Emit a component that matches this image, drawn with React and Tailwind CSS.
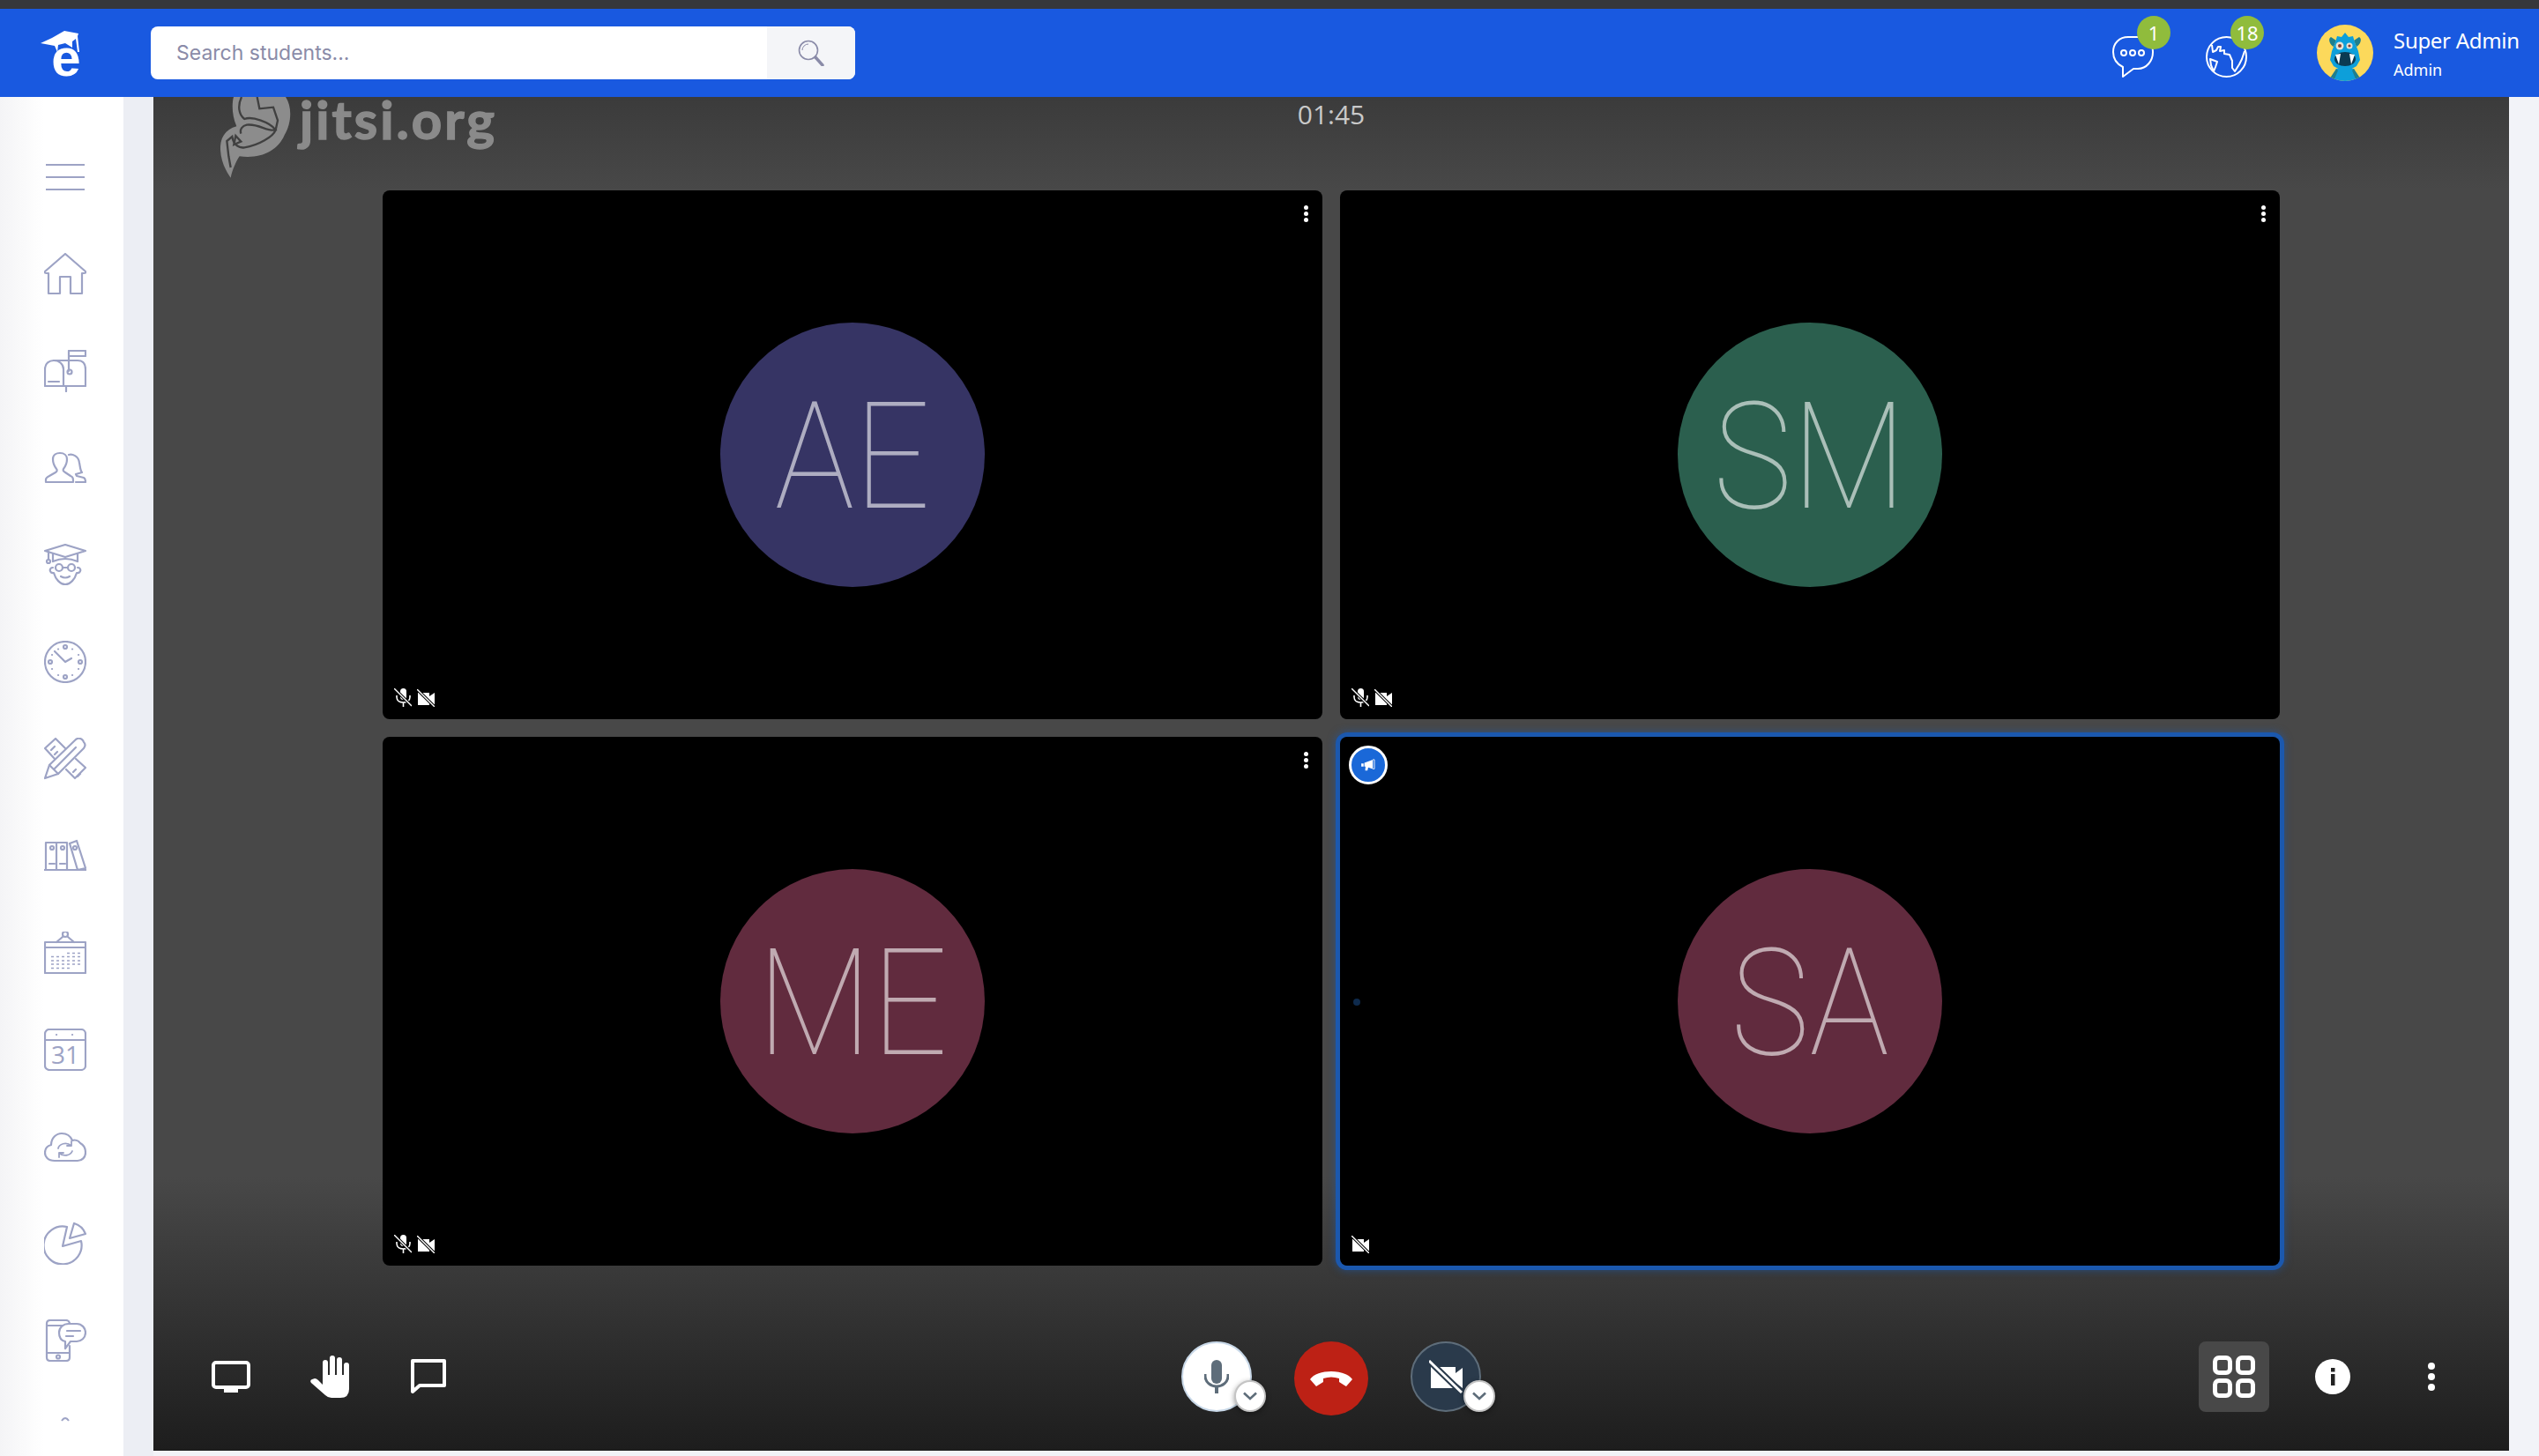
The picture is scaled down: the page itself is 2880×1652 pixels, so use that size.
const SIDE = '#9da3c5';

function SideIcon({ children }) {
  return (
    <svg viewBox="0 0 48 48" className="w-12 h-12" fill="none" stroke={SIDE} strokeWidth="2.2" strokeLinejoin="round" strokeLinecap="round">
      {children}
    </svg>
  );
}

const sideIcons = [
  // hamburger
  <>
    <path d="M2 10 H46 M2 24 H46 M2 38 H46" strokeLinecap="butt" />
  </>,
  // home
  <path d="M24 1 L47 21 Q48 23 45 23 H43 V46 H30 V27 H18 V46 H5 V23 H3 Q0 23 1 21 Z" />,
  // mailbox
  <>
    <path d="M28 24 V1 H47 V7 H28" />
    <circle cx="29" cy="25" r="2.5" />
    <path d="M1 41 V22 C1 15 6 12 11 12 H38 C44 12 47 16 47 22 V41 Z" />
    <path d="M22 41 V22 C22 16 17 12 11 12" />
    <path d="M5 36 H17 M25 41 V47" />
  </>,
  // users
  <>
    <path d="M2 40 V37 C2 35 4 34 6 33 L13 29 C15 28 15 26 14 25 C11 21 10 18 10 14 C10 9 14 7 18 7 C23 7 26 10 26 14 C26 18 25 21 22 25 C21 27 22 28 24 29 L30 33 C33 34 33 36 33 40 Z" />
    <path d="M28 9 C32 8 39 10 40 18 C41 23 41 27 43 29 L36 31 L37 33 L45 35 C47 36 47 38 47 40 H36" />
  </>,
  // student
  <>
    <path d="M24 1 L47 8 L24 15 L1 8 Z" />
    <path d="M10 11 V20 M38 11 V20 M5 9 V18" />
    <circle cx="5" cy="20" r="2" />
    <path d="M10 20 Q24 14 38 20" />
    <circle cx="17" cy="27" r="4" />
    <circle cx="31" cy="27" r="4" />
    <path d="M21 27 H27 M19 37 Q24 40 29 37" />
    <path d="M10 27 C5 27 6 34 11 33 C13 40 18 46 24 46 C30 46 35 40 37 33 C42 34 43 27 38 27" />
  </>,
  // clock
  <>
    <circle cx="24" cy="24" r="23" />
    <circle cx="24" cy="7" r="2" />
    <circle cx="24" cy="41" r="2" />
    <circle cx="7" cy="24" r="2" />
    <circle cx="41" cy="24" r="2" />
    <path d="M12 12 L24 24 L31 20" />
    <path d="M32 9.5 h.1 M39 16 h.1 M39 32 h.1 M32 39 h.1 M16 39 h.1 M9 32 h.1 M9 16 h.1 M16 9.5 h.1" />
  </>,
  // ruler and pencil
  <>
    <path d="M12 24 L1 12 L13 1 L24 12 M8 14 L12 10 M12 19 L15 16" />
    <path d="M36 24 L47 34 L35 46 L25 36 M33 39 L36 36 M38 44 L41 41" />
    <path d="M1 46 L6 31 L36 2 Q40 -1 44 3 L45 5 Q48 8 45 12 L16 41 Z" />
    <path d="M6 31 L16 41 M12 35 L36 11" />
  </>,
  // binders
  <>
    <path d="M0 40 H48 M2 40 V9 H26 V40 M14 9 V40" />
    <path d="M29 10 L37 7 L47 38 L38 40 Z" />
    <circle cx="9" cy="15" r="2" />
    <circle cx="21" cy="15" r="2" />
    <circle cx="35" cy="15" r="2" />
    <path d="M6 33 H12 M18 33 H24" />
  </>,
  // wall calendar
  <>
    <circle cx="24" cy="3" r="3" />
    <path d="M21 6 L14 12 M27 6 L34 12" />
    <path d="M1 12 H47 V47 H1 Z M1 18 H47" />
    <g strokeWidth="1.6" strokeDasharray="3 3" strokeLinecap="butt">
      <path d="M26 24.5 H42 M26 28.5 H42" />
      <path d="M8 33 H42 M8 37 H42" />
      <path d="M8 41.5 H30" />
      <path d="M8 28.5 H24" />
    </g>
  </>,
  // date 31
  <>
    <rect x="1" y="1" width="46" height="46" rx="5" />
    <path d="M1 13 H47 M14 7 h.1 M32 7 h.1" />
    <text x="24" y="40" textAnchor="middle" fontSize="28" fontWeight="400" fill={SIDE} stroke="none" fontFamily="'Open Sans', sans-serif">31</text>
  </>,
  // cloud sync
  <>
    <path d="M12 40 C4 40 1 35 1 31 C1 26 4 23 8 22 C8 14 14 9 20 9 C26 9 30 12 32 17 C35 16 39 17 41 20 C45 22 47 26 47 31 C47 36 43 40 38 40 Z" />
    <path d="M16 26 C17 21 25 18 31 23 M31 18 V23 H26" strokeWidth="1.8" />
    <path d="M32 29 C30 34 22 36 17 31 M17 36 V31 H22" strokeWidth="1.8" />
  </>,
  // pie chart
  <>
    <path d="M26 5 A21.5 21.5 0 1 0 42 21 L21 27 Z" />
    <path d="M34 1 A20 20 0 0 1 47 13 L29 18 Z" />
  </>,
  // phone message
  <>
    <path d="M29 4 Q28 1 25 1 H7 Q3 1 3 5 V43 Q3 47 7 47 H25 Q29 47 29 43 V30" />
    <path d="M3 7 H21 M3 38 H29" />
    <circle cx="16" cy="42.5" r="2" />
    <path d="M28 5 H37 C43 5 47 10 47 15 C47 21 42 25 37 25 H30 L24 33 V25 C19 24 17 20 17 15 C17 9 22 5 28 5 Z" />
    <path d="M26 13 H41 M25 19 H33" />
  </>,
];

function Logo() {
  return (
    <svg viewBox="0 0 44 52" className="w-11 h-[52px] overflow-visible">
      <path d="M27 0 L43 3 L42 6 L44 24 L42 24 L40 9 L36 12 L36 19 L28 14 L20 16 L19 24 L16 17 L0 14 L13 8 Z" fill="#fff" />
      <text x="29" y="51" textAnchor="middle" fontSize="60" fontWeight="900" fill="#fff" fontFamily="'Liberation Sans', sans-serif">e</text>
    </svg>
  );
}

function Monster() {
  return (
    <svg viewBox="0 0 64 64" className="w-16 h-16 rounded-full">
      <rect width="64" height="64" fill="#fcd95b" />
      <path d="M18 64 L22 50 H42 L46 64 Z" fill="#0d9fda" />
      <path d="M14 62 L22 50 L24 52 L19 64 Z M50 62 L42 50 L40 52 L45 64 Z" fill="#1f7f8e" />
      <path d="M16 14 C12 16 15 23 19 25 L22 18 Z M48 14 C52 16 49 23 45 25 L42 18 Z" fill="#1f7f8e" />
      <path d="M32 9 L36 14 L41 13 L43 20 L47 30 L49 40 L45 47 L38 51 H26 L19 47 L15 40 L17 30 L21 20 L23 13 L28 14 Z" fill="#0d9fda" />
      <circle cx="26" cy="24" r="4.5" fill="#e9e2d4" />
      <circle cx="37" cy="24" r="3.5" fill="#e9e2d4" />
      <circle cx="26" cy="24" r="2" fill="#8a3f2e" />
      <circle cx="37" cy="24" r="1.6" fill="#8a3f2e" />
      <ellipse cx="32" cy="39" rx="12" ry="8" fill="#0b3a52" />
      <path d="M21 34 L27 33 L25 45 Z M43 34 L37 33 L39 45 Z" fill="#fff" />
    </svg>
  );
}

function Badge({ value, className }) {
  return (
    <span className={`absolute w-[38px] h-[38px] rounded-full bg-[#90bc3c] text-white text-[22px] flex items-center justify-center font-['Noto_Sans',sans-serif] ${className}`}>
      {value}
    </span>
  );
}

function Header() {
  return (
    <div className="h-[100px] bg-[#1959e0] flex items-center shrink-0">
      <div className="w-[171px] pl-[46px] pt-[1px] flex items-center">
        <Logo />
      </div>
      <div className="w-[799px] h-[60px] bg-white rounded-lg flex overflow-hidden">
        <input
          placeholder="Search students..."
          className="flex-1 min-w-0 pl-[29px] text-[23px] font-['Inter',sans-serif] text-[#8a8ba8] placeholder:text-[#8a8ba8] outline-none"
        />
        <button className="w-[100px] bg-[#f4f5f8] flex items-center justify-center">
          <svg viewBox="0 0 30 30" className="w-[30px] h-[30px]" fill="none" stroke="#8a8ba8" strokeWidth="1.6">
            <circle cx="12" cy="12" r="10.5" />
            <path d="M5 12 A7 7 0 0 1 12 5" strokeWidth="1" />
            <path d="M20 20 L28 29" strokeWidth="3.4" strokeLinecap="round" />
          </svg>
        </button>
      </div>
      <div className="ml-auto flex items-center pr-[21px]">
        <div className="relative w-[47px] h-[47px] mt-[9px] mr-[59px]">
          <svg viewBox="0 0 47 47" className="w-[47px] h-[47px]" fill="none" stroke="#fff" strokeWidth="2" strokeLinejoin="round">
            <path d="M18 1 H29 C39 1 46 8 46 18 C46 28 39 37 29 37 H24 L12 46 L12 35 C6 32 1 26 1 18 C1 8 8 1 18 1 Z" />
            <circle cx="13" cy="19" r="3" />
            <circle cx="23" cy="19" r="3" />
            <circle cx="33" cy="19" r="3" />
          </svg>
          <Badge value="1" className="-top-[23px] left-[28px]" />
        </div>
        <div className="relative w-[47px] h-[47px] mt-[9px] mr-[79px]">
          <svg viewBox="0 0 47 47" className="w-[47px] h-[47px]" fill="none" stroke="#fff" strokeWidth="2" strokeLinejoin="round">
            <circle cx="23.5" cy="23.5" r="22.5" />
            <path d="M7 10 L8 18 L12 16 L14 12 L17 12 L16 17 L21 16 L21 20 L27 21 L30 28 L30 36 L33 40 L38 32 L41 26 L44 17" />
            <path d="M5 26 L13 29 L11 35 L9 40 L6 33 Z" />
          </svg>
          <Badge value="18" className="-top-[23px] left-[28px]" />
        </div>
        <Monster />
        <div className="ml-[23px] w-[144px] flex flex-col text-white font-['Noto_Sans',sans-serif] whitespace-nowrap">
          <span className="text-[24px] tracking-[-0.3px] leading-[34px]">Super Admin</span>
          <span className="text-[18px] leading-[26px] mt-[3px]">Admin</span>
        </div>
      </div>
    </div>
  );
}

function Sidebar() {
  return (
    <div className="w-[140px] shrink-0 h-[1542px] overflow-hidden pt-[36px] pl-[7px] bg-[linear-gradient(to_right,#f4f4f6,#ffffff_50px)] flex flex-col items-center">
      {sideIcons.map((icon, i) => (
        <div key={i} className="h-[110px] w-full shrink-0 flex items-center justify-center">
          <SideIcon>{icon}</SideIcon>
        </div>
      ))}
      <svg viewBox="0 0 12 6" className="w-3 h-[6px] mt-[31px] shrink-0" fill="none" stroke={SIDE} strokeWidth="2">
        <path d="M2 5 Q6 -1 10 5" />
      </svg>
    </div>
  );
}

function VideoOffSmall({ className }) {
  return (
    <svg viewBox="0 0 20 20" className={className}>
      <path d="M1 4 H14 V8 L20 4 V18 L14 14 V18 H1 Z" fill="#fff" />
      <path d="M0 0 L20 20" stroke="#000" strokeWidth="3.4" />
      <path d="M0 0 L20 20" stroke="#fff" strokeWidth="1.4" />
    </svg>
  );
}

function MicOffSmall({ className }) {
  return (
    <svg viewBox="0 0 20 21" className={className}>
      <rect x="7" y="0" width="7" height="13" rx="3.5" fill="#fff" />
      <path d="M3 8 V10 C3 14 6.5 16 10.5 16 C14.5 16 18 14 18 10 V8 M10.5 16 V21" fill="none" stroke="#fff" strokeWidth="1.6" />
      <path d="M0 0 L20 20" stroke="#000" strokeWidth="3.4" />
      <path d="M0 0 L20 20" stroke="#fff" strokeWidth="1.4" />
    </svg>
  );
}

function Tile({ initials, color, muted, speaker }) {
  return (
    <div className={`relative bg-black rounded-lg flex items-center justify-center ${speaker ? 'shadow-[0_0_0_5px_#1b58ae,0_0_8px_6px_rgba(27,88,174,0.5)]' : ''}`}>
      <div className={`w-[300px] h-[300px] rounded-full flex items-center justify-center ${color}`}>
        <span className="inline-block scale-x-90 mt-[5px] text-[168px] leading-none font-thin text-white/60 font-['Roboto',sans-serif]">{initials}</span>
      </div>
      {speaker ? (
        <>
          <span className="absolute top-[10px] left-[10px] w-[44px] h-[44px] rounded-full bg-[#1a68d8] border-[3px] border-white flex items-center justify-center">
            <svg viewBox="0 0 18 16" className="w-4 h-[14px]">
              <path d="M0 6 H3 V10 H0 Z M4 5 L15 1 V13 L9 11 L8 15 H5 L5.5 10 L4 10 Z" fill="#fff" />
              <path d="M15 1 L17 1 V13 L15 13" fill="none" stroke="#fff" strokeWidth="1" />
            </svg>
          </span>
          <span className="absolute left-[15px] top-[297px] w-2 h-2 rounded-full bg-[#0e2a4c]" />
        </>
      ) : (
        <span className="absolute top-[17px] right-[16px] flex flex-col gap-[2px]">
          <i className="w-[5px] h-[5px] rounded-full bg-white" />
          <i className="w-[5px] h-[5px] rounded-full bg-white" />
          <i className="w-[5px] h-[5px] rounded-full bg-white" />
        </span>
      )}
      <div className="absolute left-[13px] bottom-[14px] flex gap-[6px] items-center">
        {muted && <MicOffSmall className="w-5 h-[21px]" />}
        <VideoOffSmall className="w-5 h-5" />
      </div>
    </div>
  );
}

function Chevron({ className }) {
  return (
    <span className={`absolute w-9 h-9 rounded-full bg-white border-2 border-[#c4c4c4] shadow-[0_2px_6px_rgba(0,0,0,0.4)] flex items-center justify-center ${className}`}>
      <svg viewBox="0 0 16 10" className="w-4 h-[10px]" fill="none" stroke="#5e6d7a" strokeWidth="2.6">
        <path d="M1 1.5 L8 8 L15 1.5" />
      </svg>
    </span>
  );
}

function Toolbar() {
  return (
    <div className="grid grid-cols-[1fr_auto_1fr] mt-[86px]">
      <div className="flex items-center h-20 pl-[66px]">
        <svg viewBox="0 0 44 36" className="w-11 h-9" fill="#fff">
          <rect x="2" y="2" width="40" height="28" rx="3" fill="none" stroke="#fff" strokeWidth="4" />
          <rect x="14" y="31" width="16" height="5" />
        </svg>
        <svg viewBox="0 0 44 48" className="w-11 h-12 ml-[68px]" fill="#fff">
          <rect x="14" y="5" width="6" height="24" rx="3" />
          <rect x="22" y="0" width="6" height="24" rx="3" />
          <rect x="30" y="2" width="6" height="24" rx="3" />
          <rect x="38" y="8" width="6" height="24" rx="3" />
          <path d="M14 22 H44 V38 Q44 48 34 48 H24 Q20 48 17 45 L1 31 Q-1 28 2 27 L5 26 Q7 26 9 28 L14 33 Z" />
        </svg>
        <svg viewBox="0 0 40 40" className="w-10 h-10 ml-[70px]" fill="none" stroke="#fff" strokeWidth="4" strokeLinejoin="round">
          <path d="M2 2 H38 V30 H10 L2 37 Z" />
        </svg>
      </div>
      <div className="flex items-start gap-12">
        <div className="relative w-20 h-20 rounded-full bg-white border-2 border-[#c8d8e8] flex items-center justify-center">
          <svg viewBox="0 0 28 38" className="w-7 h-[38px]" fill="#5e6d7a">
            <rect x="8" y="0" width="12" height="27" rx="6" />
            <path d="M1 16 V18 C1 25 7 30 14 30 C21 30 27 25 27 18 V16" fill="none" stroke="#5e6d7a" strokeWidth="3" />
            <rect x="12" y="30" width="4" height="8" />
          </svg>
          <Chevron className="-right-[18px] -bottom-[2px]" />
        </div>
        <div className="w-[84px] h-[84px] rounded-full bg-[#bd2115] flex items-center justify-center">
          <svg viewBox="0 0 48 20" className="w-12 h-5" fill="#fff">
            <path d="M0 11 C8 -1 40 -1 48 11 L41 19 L33 14 L33 10 C27 8 21 8 15 10 L15 14 L7 19 Z" />
          </svg>
        </div>
        <div className="relative w-20 h-20 rounded-full bg-[#2a3a4b] border-2 border-[#5e6d7a] flex items-center justify-center">
          <svg viewBox="0 0 38 38" className="w-[38px] h-[38px]">
            <path d="M2 8 H30 V15 L38 9 V32 L30 26 V32 H2 Z" fill="#fff" />
            <path d="M0 1 L37 37" stroke="#2a3a4b" strokeWidth="7" />
            <path d="M0 1 L37 37" stroke="#fff" strokeWidth="3" />
          </svg>
          <Chevron className="-right-[18px] -bottom-[2px]" />
        </div>
      </div>
      <div className="flex items-center justify-end h-20 pr-[84px]">
        <div className="w-20 h-20 rounded-lg bg-[#484848] grid grid-cols-2 gap-[4px] p-4">
          <i className="rounded-[7px] border-[5px] border-white" />
          <i className="rounded-[7px] border-[5px] border-white" />
          <i className="rounded-[7px] border-[5px] border-white" />
          <i className="rounded-[7px] border-[5px] border-white" />
        </div>
        <svg viewBox="0 0 40 40" className="w-10 h-10 ml-[52px]">
          <circle cx="20" cy="20" r="20" fill="#fff" />
          <rect x="18" y="10" width="4.5" height="4.5" fill="#222" />
          <rect x="18" y="17" width="4.5" height="13" fill="#222" />
        </svg>
        <div className="flex flex-col gap-1 ml-[88px]">
          <i className="w-2 h-2 rounded-full bg-white" />
          <i className="w-2 h-2 rounded-full bg-white" />
          <i className="w-2 h-2 rounded-full bg-white" />
        </div>
      </div>
    </div>
  );
}

function Watermark() {
  return (
    <div className="absolute left-[76px] top-0 flex items-start">
      <svg viewBox="150 60 240 276" className="w-20 h-[92px] shrink-0">
        <path d="M195 60 C188 85 190 125 205 160 C170 170 148 195 150 240 C152 280 170 315 185 335 C190 310 205 275 215 262 C285 272 345 245 368 190 C392 150 395 95 372 60 Z" fill="#8c8c8c" />
        <g fill="none" stroke="#404040" strokeWidth="7">
          <path d="M222 60 C208 90 212 120 232 135 C258 125 318 145 338 172 C312 180 280 150 240 155 C225 158 215 170 220 185" />
          <path d="M275 60 L283 100 L330 95 L345 140 L338 172 C330 195 280 225 232 232 C215 235 195 225 190 195 L172 210 L178 262 L185 300" />
          <path d="M202 192 L220 212 L196 222 Z" />
        </g>
      </svg>
      <span className="ml-[10px] mt-[2px] text-[60px] leading-[46px] font-bold text-[#8a8a8a] [-webkit-text-stroke:1.5px_#8a8a8a] font-['Lato',sans-serif] tracking-[3px]">jitsi.org</span>
    </div>
  );
}

function Stage() {
  return (
    <div className="relative w-[2672px] h-[1536px] shrink-0 overflow-hidden bg-[linear-gradient(180deg,#3b3b3b_0,#484848_105px,#484848_1225px,#1d1d1d_100%)]">
      <Watermark />
      <div className="h-[106px] text-center text-[30px] leading-10 text-[#c9c9c9] font-['Open_Sans',sans-serif]">01:45</div>
      <div className="grid grid-cols-[1066px_1066px] grid-rows-[600px_600px] gap-5 justify-center">
        <Tile initials="AE" color="bg-[#363464]" muted />
        <Tile initials="SM" color="bg-[#2b5f4e]" muted />
        <Tile initials="ME" color="bg-[#612b3e]" muted />
        <Tile initials="SA" color="bg-[#612b3e]" speaker />
      </div>
      <Toolbar />
    </div>
  );
}

export default function App() {
  return (
    <div className="w-[2880px] h-[1652px] overflow-hidden bg-[#f2f3f8] flex flex-col">
      <div className="h-[10px] bg-[#36373b] shrink-0" />
      <Header />
      <div className="flex">
        <Sidebar />
        <div className="w-[34px] shrink-0 bg-[#eceef4]" />
        <Stage />
      </div>
    </div>
  );
}
